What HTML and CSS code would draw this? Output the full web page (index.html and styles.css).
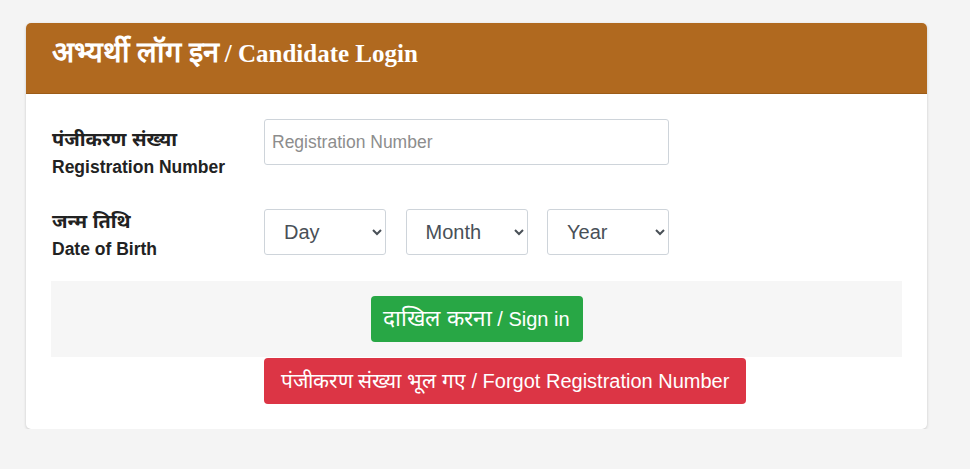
FILE: index.html
```html
<!DOCTYPE html>
<html lang="hi">
<head>
<meta charset="utf-8">
<title>Candidate Login</title>
<link rel="stylesheet" href="styles.css">
</head>
<body>
<div class="card">
  <div class="card-header"><span class="hi hi-head">अभ्यर्थी लॉग इन</span> / Candidate Login</div>
  <div class="card-body">
    <div class="row">
      <label class="label" for="reg"><span class="hi">पंजीकरण संख्या</span><br>Registration Number</label>
      <input id="reg" class="control" type="text" placeholder="Registration Number">
    </div>
    <div class="row row-dob">
      <label class="label"><span class="hi">जन्म तिथि</span><br>Date of Birth</label>
      <div class="dob">
        <select class="control select"><option>Day</option></select>
        <select class="control select"><option>Month</option></select>
        <select class="control select"><option>Year</option></select>
      </div>
    </div>
    <div class="actions">
      <button class="btn btn-green" type="button"><span class="hi">दाखिल करना</span> / Sign in</button>
    </div>
    <div class="forgot-row">
      <button class="btn btn-red" type="button"><span class="hi hi-small">पंजीकरण संख्या भूल गए</span> / Forgot Registration Number</button>
    </div>
  </div>
</div>
</body>
</html>
```
FILE: styles.css
```css
html, body {
  margin: 0;
  padding: 0;
  background: #f4f4f4;
}
body {
  padding: 23px 0 0 26px;
  font-family: "Liberation Sans", Arial, "Noto Sans", sans-serif;
  color: #212529;
}
.hi {
  font-size: 1.13em;
}
.hi-head {
  font-size: 1.16em;
}
.hi-small {
  font-size: 1.04em;
}
.card {
  width: 901px;
  background: #fff;
  border-radius: 5px;
  box-shadow: 0 1px 3px rgba(0,0,0,0.18);
  overflow: hidden;
}
.card-header {
  background: #b0691f;
  color: #fff;
  font-family: "Liberation Serif", "Times New Roman", serif;
  font-weight: bold;
  font-size: 25px;
  line-height: 30px;
  height: 71px;
  box-sizing: border-box;
  padding: 14px 26px 0;
  border-bottom: 1px solid #9c5c18;
}
.card-body {
  padding: 25px 25px 25px 25px;
}
.row {
  display: grid;
  grid-template-columns: 213px 405px;
  grid-template-rows: 46px;
  align-items: start;
}
.row-dob {
  margin-top: 44px;
}
.label {
  font-size: 17.5px;
  font-weight: bold;
  line-height: 27px;
  padding: 7px 0 0 1px;
  color: #222;
  white-space: nowrap;
}
.row-dob .label {
  padding-top: 0;
  margin-top: -1px;
}
.control {
  box-sizing: border-box;
  height: 46px;
  border: 1px solid #ced4da;
  border-radius: 3px;
  background: #fff;
  font-family: "Liberation Sans", Arial, sans-serif;
  color: #495057;
  margin: 0;
}
input.control {
  width: 405px;
  font-size: 17.5px;
  padding: 0 7px;
}
input.control::placeholder {
  color: #8d8d8d;
}
.dob {
  display: flex;
  gap: 19.5px;
}
.select {
  width: 122px;
  font-size: 20px;
  padding: 0 8px 0 15px;
}
.actions {
  margin-top: 26px;
  background: #f6f6f6;
  padding: 15px 0;
  display: flex;
  justify-content: center;
}
.forgot-row {
  margin-top: 1px;
  padding-left: 213px;
}
.btn {
  height: 46px;
  border: none;
  border-radius: 4px;
  color: #fff;
  font-family: "Liberation Sans", Arial, sans-serif;
  font-size: 20px;
  line-height: 24px;
  padding: 0 8px;
  cursor: pointer;
  white-space: nowrap;
}
.btn-green {
  background: #28a745;
  width: 212px;
}
.btn-red {
  background: #dc3545;
  width: 482px;
}
```
